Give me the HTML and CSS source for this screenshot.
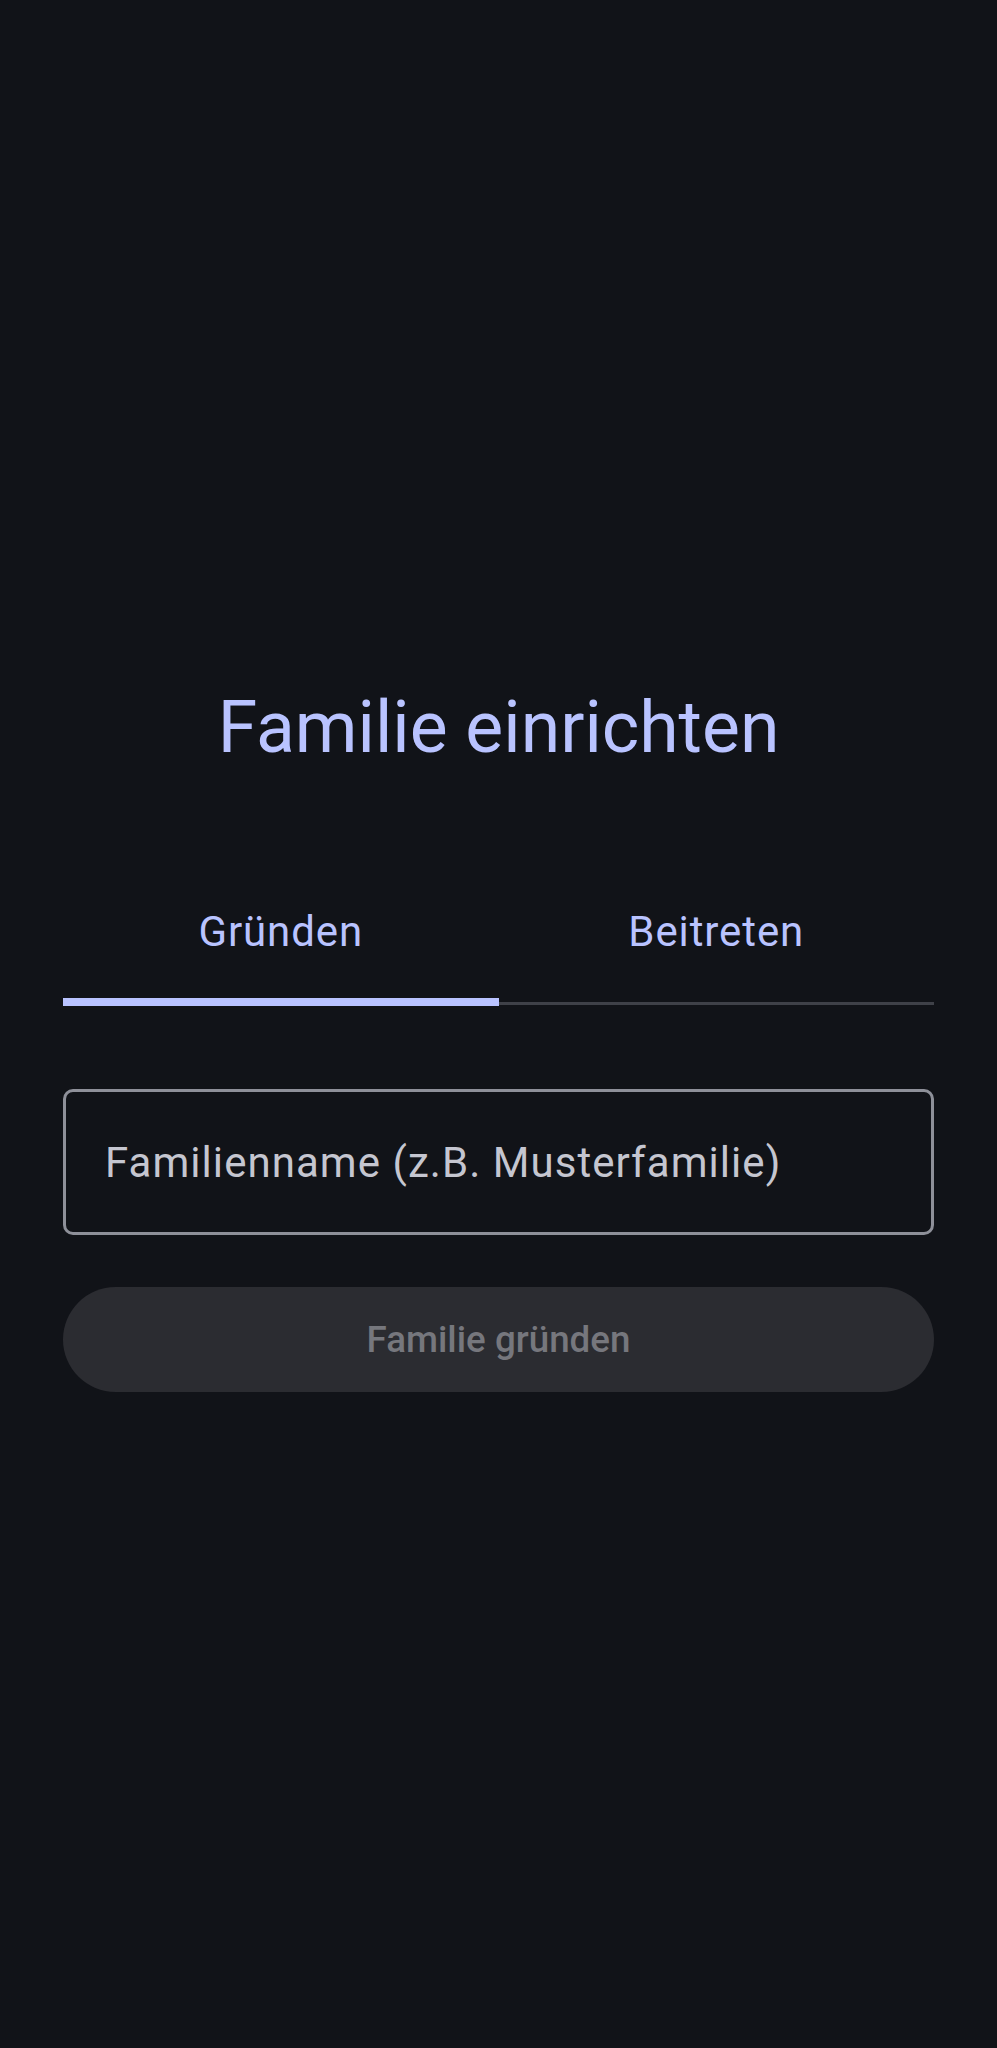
FILE: index.html
```html
<!DOCTYPE html>
<html lang="de">
<head>
  <meta charset="UTF-8">
  <meta name="viewport" content="width=device-width, initial-scale=1.0">
  <title>Familie einrichten</title>
  <link rel="stylesheet" href="styles.css">
</head>
<body>
  <main class="setup">
    <h1 class="setup__title">Familie einrichten</h1>

    <div class="tabs">
      <button class="tab is-active">Gründen</button>
      <button class="tab">Beitreten</button>
    </div>

    <form class="setup__form">
      <label class="field">
        <input class="field__input" type="text" placeholder="Familienname (z.B. Musterfamilie)">
      </label>
      <button class="button" type="button" disabled>Familie gründen</button>
    </form>
  </main>
</body>
</html>
```

FILE: styles.css
```css
* {
  box-sizing: border-box;
}

html,
body {
  margin: 0;
  height: 100%;
}

body {
  background: #111318;
  font-family: Roboto, "Noto Sans", sans-serif;
  color: #e2e2e9;
}

.setup {
  padding: 684px 63px 0;
}

.setup__title {
  margin: 0;
  font-size: 71.5px;
  line-height: 88px;
  font-weight: 400;
  text-align: center;
  color: #b9c3ff;
}

.tabs {
  position: relative;
  display: flex;
  margin-top: 108px;
}

/* thin divider under the whole tab row */
.tabs::after {
  content: "";
  position: absolute;
  left: 0;
  right: 0;
  bottom: 1px;
  height: 3px;
  background: #3f4148;
}

.tab {
  appearance: none;
  -webkit-appearance: none;
  position: relative;
  flex: 1;
  height: 126px;
  padding: 0 0 22px;
  border: 0;
  background: transparent;
  font-family: inherit;
  font-size: 42px;
  line-height: 50px;
  font-weight: 400;
  letter-spacing: .9px;
  color: #b9c3ff;
  text-align: center;
  cursor: pointer;
}

.tab.is-active::after {
  content: "";
  position: absolute;
  left: 0;
  right: 0;
  bottom: 0;
  height: 8px;
  background: #b9c3ff;
  z-index: 1;
}

.setup__form {
  display: flex;
  flex-direction: column;
  gap: 52px;
  margin-top: 83px;
}

.field {
  display: block;
}

.field__input {
  display: block;
  width: 100%;
  height: 146px;
  padding: 0 39px;
  border: 3px solid #8e9099;
  border-radius: 10px;
  background: transparent;
  font-family: inherit;
  font-size: 42px;
  letter-spacing: 1.05px;
  color: #e2e2e9;
  outline: none;
}

.field__input::placeholder {
  color: #c5c6d0;
  opacity: 1;
}

.button {
  appearance: none;
  -webkit-appearance: none;
  height: 105px;
  border: 0;
  border-radius: 53px;
  background: #2b2c31;
  font-family: inherit;
  font-size: 36.75px;
  font-weight: 500;
  letter-spacing: 0;
  color: #76777d;
}
```
